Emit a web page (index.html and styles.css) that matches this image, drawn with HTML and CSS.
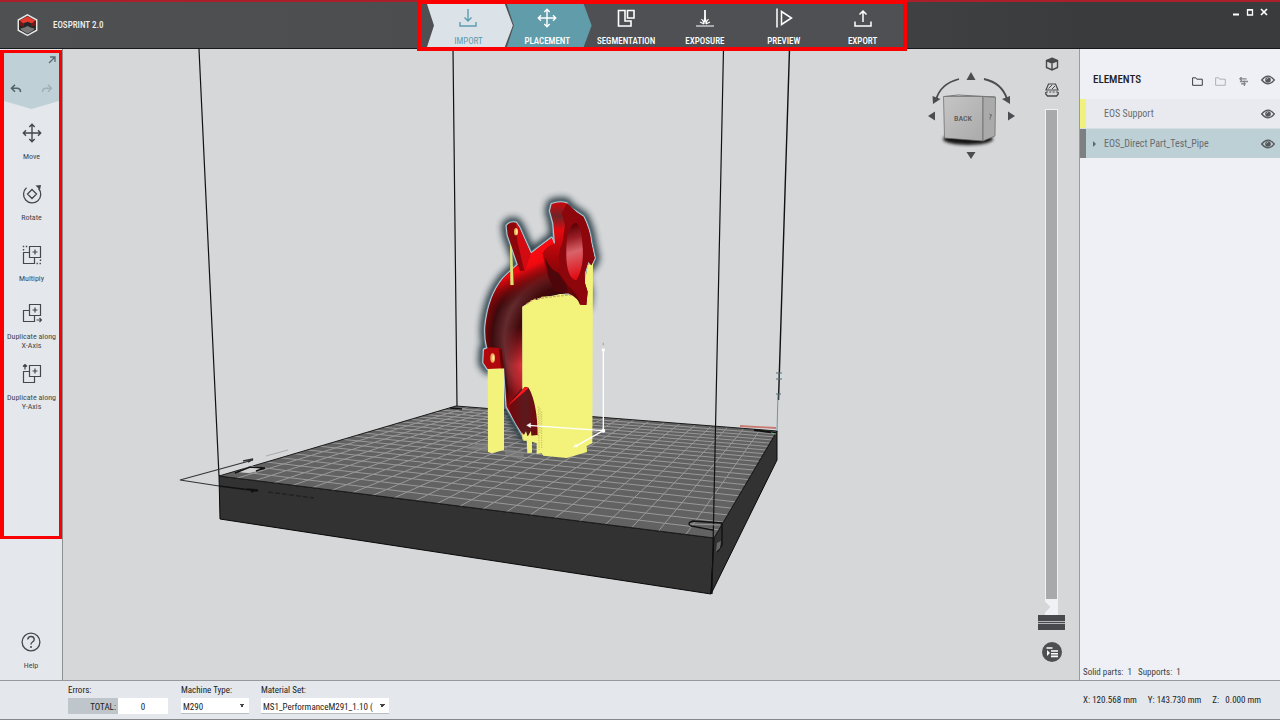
FILE: index.html
```html
<!DOCTYPE html>
<html lang="en">
<head>
<meta charset="utf-8">
<meta name="viewport" content="width=device-width, initial-scale=1">
<title>EOSPRINT 2.0</title>
<link rel="stylesheet" href="styles.css">
</head>
<body>
<svg class="defs" aria-hidden="true">
  <symbol id="eye" viewBox="0 0 14 10"><path d="M.7 5Q7-2.6 13.3 5 7 12.600.7 5Z" fill="none" stroke="#55575b" stroke-width="1.300"/><circle cx="7" cy="5" r="2.800" fill="#55575b"/><path d="M5.500 4.500Q6 3.300 7.200 3.300" stroke="#ddd" stroke-width=".7" fill="none"/></symbol>
  <symbol id="move" viewBox="0 0 20 20"><path d="M10 1.500v17M1.500 10h17M7.300 4 10 1.300 12.700 4M7.300 16 10 18.700 12.700 16M4 7.300 1.300 10 4 12.700M16 7.300 18.700 10 16 12.700" fill="none" stroke="currentColor" stroke-width="1.400"/></symbol>
  <symbol id="folder" viewBox="0 0 11 9"><path d="M.6 8.300V.8h3.200l1 1.400h5.500v6.100z" fill="none" stroke="currentColor"/></symbol>
</svg>

<header class="topbar">
  <div class="brand">
    <svg class="logo" viewBox="0 0 20 22"><path d="M10 .8 19.200 6v10.200L10 21.300.8 16.200V6z" fill="#252525" stroke="#e8e8e8" stroke-width="1.500"/><path d="M10 2.200 17.800 6.500 14.500 9.500 10 7.800 5.500 9.500 2.200 6.500z" fill="#e33a30"/><path d="M2.500 7.500l4 3v2l-4-1zM17.500 7.500l-4 3v2l4-1z" fill="#7d1513"/><path d="M10 12l3 1.500 4 1-1 1.800-6 3.500-6-3.500-1-1.800 4-1z" fill="#777"/></svg>
    <h1>EOSPRINT 2.0</h1>
  </div>
  <nav class="steps">
    <button class="step step-import"><svg viewBox="0 0 20 20"><path d="M10 1v12M6.500 9.500 10 13l3.500-3.500M2 14v4h16v-4" fill="none" stroke="currentColor" stroke-width="1.400"/></svg><span>IMPORT</span></button>
    <button class="step step-current"><svg><use href="#move"/></svg><span>PLACEMENT</span></button>
    <button class="step"><svg viewBox="0 0 20 20"><path d="M9 2.500H2.500V18H15v-5H9zM11.500 2.500H18V10h-6.500z" fill="none" stroke="currentColor" stroke-width="1.600"/></svg><span>SEGMENTATION</span></button>
    <button class="step"><svg viewBox="0 0 20 20"><path d="M10 2v12" stroke="currentColor" stroke-width="1.800"/><path d="M1 18h18M6.500 11l2.500 3.500M13.500 11 11 14.500M5 14l4 2M15 14l-4 2M10 9 8.500 15h3z" fill="none" stroke="currentColor" stroke-width="1.100"/></svg><span>EXPOSURE</span></button>
    <button class="step"><svg viewBox="0 0 20 20"><path d="M3 .5v19M7.500 3.500v13L17.500 10z" fill="none" stroke="currentColor" stroke-width="1.500"/></svg><span>PREVIEW</span></button>
    <button class="step"><svg viewBox="0 0 20 20"><path d="M10 14V3M6.500 6.500 10 3l3.500 3.500M2 13.500V18h16v-4.500" fill="none" stroke="currentColor" stroke-width="1.500"/></svg><span>EXPORT</span></button>
  </nav>
  <div class="window-buttons">
    <button aria-label="Minimize"><svg viewBox="0 0 8 8"><path d="M1 6.500h6" stroke="#fff" stroke-width="2"/></svg></button>
    <button aria-label="Maximize"><svg viewBox="0 0 8 8"><path d="M1.500 2h5v5h-5zM1 1.700h6" fill="none" stroke="#fff" stroke-width="1.300"/></svg></button>
    <button aria-label="Close"><svg viewBox="0 0 8 8"><path d="M1 1l6 6M7 1 1 7" stroke="#fff" stroke-width="1.700"/></svg></button>
  </div>
</header>

<main class="workspace">
  <aside class="sidebar">
    <section class="tools">
      <div class="history">
        <button class="expand" aria-label="Expand"><svg viewBox="0 0 8 8"><path d="M1 7l5.500-5.500M2 1h5v5" fill="none" stroke="#5b6a70" stroke-width="1.300"/></svg></button>
        <div class="history-row">
          <button aria-label="Undo"><svg viewBox="0 0 12 10"><path d="M5 .8 1.500 4.300 5 7.800M1.500 4.300H7Q10.500 4.500 10.500 8" fill="none" stroke="#53636a" stroke-width="1.600"/></svg></button>
          <button aria-label="Redo"><svg viewBox="0 0 12 10"><path d="M7 .8 10.500 4.300 7 7.800M10.500 4.300H5Q1.500 4.500 1.500 8" fill="none" stroke="#9cb0b6" stroke-width="1.400"/></svg></button>
        </div>
      </div>
      <button class="tool"><svg><use href="#move"/></svg><span>Move</span></button>
      <button class="tool"><svg viewBox="0 0 20 20"><path d="M4.500 3.800A8.600 8.600 0 1 0 16.500 4.500M10 5.500 14.500 10 10 14.500 5.500 10z" fill="none" stroke="currentColor" stroke-width="1.300"/><path d="M19 1l-5.500.5 4.500 4.500z" fill="currentColor"/></svg><span>Rotate</span></button>
      <button class="tool"><svg viewBox="0 0 20 20"><path d="M7.500 1.500h11v11h-11zM7.500 7.500h-6v11h11v-6M13 4.500v5M10.500 7h5" fill="none" stroke="currentColor" stroke-width="1.200"/><path d="M.8 1.500h5M1.500 4v2M14.500 18.500h5M18.500 14.500v2" stroke="currentColor" stroke-width="1.400" stroke-dasharray="1.400 1.600"/></svg><span>Multiply</span></button>
      <div class="duplicates">
        <button class="tool"><svg viewBox="0 0 20 20"><path d="M7.500 1.500h11v11h-11zM7.500 7.500h-6v11h11v-6M13 4.500v5M10.500 7h5M14.500 17h5M17.500 15l2 2-2 2" fill="none" stroke="currentColor" stroke-width="1.200"/></svg><span>Duplicate along<br>X-Axis</span></button>
        <button class="tool"><svg viewBox="0 0 20 20"><path d="M7.500 1.500h11v11h-11zM7.500 7.500h-6v11h11v-6M13 4.500v5M10.500 7h5M3 5.500v-5M1 2.500l2-2 2 2" fill="none" stroke="currentColor" stroke-width="1.200"/></svg><span>Duplicate along<br>Y-Axis</span></button>
      </div>
    </section>
    <button class="tool help"><svg viewBox="0 0 20 20"><circle cx="10" cy="10" r="8.900" fill="none" stroke="currentColor" stroke-width="1.300"/><path d="M6.800 7.500Q7 4.500 10 4.500t3.200 2.800Q13.200 9 11.500 10 10 11 10 12.500" fill="none" stroke="currentColor" stroke-width="1.400"/><circle cx="10" cy="15" r="1" fill="currentColor"/></svg><span>Help</span></button>
  </aside>

  <section class="viewport" aria-label="Build platform">
    <svg class="scene" viewBox="63 49 1016 631">
      <defs>
        <radialGradient id="pipe" cx="340" cy="450" r="305" gradientUnits="userSpaceOnUse"><stop offset=".4" stop-color="#350608"/><stop offset=".55" stop-color="#43090b"/><stop offset=".68" stop-color="#632b2e"/><stop offset=".8" stop-color="#3c0a0d"/><stop offset=".87" stop-color="#750609"/><stop offset="1" stop-color="#c8080d"/></radialGradient>
        <linearGradient id="top" x1="165" y1="185" x2="222" y2="318" gradientUnits="userSpaceOnUse"><stop offset="0" stop-color="#ff0b12"/><stop offset=".4" stop-color="#f00a10"/><stop offset=".65" stop-color="#8d070a" stop-opacity=".8"/><stop offset="1" stop-color="#3b0608" stop-opacity="0"/></linearGradient>
        <linearGradient id="lower" x1="0" y1="410" x2="0" y2="620" gradientUnits="userSpaceOnUse"><stop offset="0" stop-color="#e52430" stop-opacity="0"/><stop offset=".55" stop-color="#ef3740"/><stop offset="1" stop-color="#ad1118"/></linearGradient>
        <linearGradient id="lowfade" x1="125" y1="0" x2="190" y2="0" gradientUnits="userSpaceOnUse"><stop offset="0" stop-color="#000"/><stop offset="1" stop-color="#fff"/></linearGradient>
        <mask id="fade"><rect x="100" y="380" width="100" height="270" fill="url(#lowfade)"/></mask>
        <linearGradient id="flange" x1="0" y1="36" x2="0" y2="320" gradientUnits="userSpaceOnUse"><stop offset="0" stop-color="#cf070d"/><stop offset=".15" stop-color="#6c2528"/><stop offset=".3" stop-color="#e30a10"/><stop offset=".6" stop-color="#a20509"/><stop offset="1" stop-color="#600406"/></linearGradient>
        <linearGradient id="bore" x1="320" y1="110" x2="365" y2="260" gradientUnits="userSpaceOnUse"><stop offset="0" stop-color="#5d0205"/><stop offset=".25" stop-color="#9c1f27"/><stop offset=".5" stop-color="#d9636a"/><stop offset="1" stop-color="#e20b13"/></linearGradient>
        <linearGradient id="cone" x1="150" y1="0" x2="235" y2="0" gradientUnits="userSpaceOnUse"><stop offset="0" stop-color="#75070b"/><stop offset=".55" stop-color="#591b1e"/><stop offset="1" stop-color="#780509"/></linearGradient>
        <linearGradient id="cube" x1="0" y1="0" x2="1" y2="1"><stop offset="0" stop-color="#c5c5c6"/><stop offset="1" stop-color="#aaaaab"/></linearGradient>
        <filter id="glow" x="-30%" y="-20%" width="160%" height="140%"><feGaussianBlur stdDeviation="10"/></filter>
        <filter id="soft" x="-20%" y="-80%" width="140%" height="260%"><feGaussianBlur stdDeviation="1.500"/></filter>
        <path id="body" d="M275 144Q190 205 130 265 85 320 76 410 73 470 95 500L132 530 140 650 190 738H232V590H187V350Q225 320 340 308z"/>
        <path id="lug" d="M140 107Q150 94 168 98L178 113 212 190 193 242 180 243 143 135z"/>
        <path id="rim" d="M275 42Q300 33 320 40L325 50 350 67 370 80Q390 120 393 155L404 205 394 226 385 215 374 250 375 280 383 305 379 345 360 344Q355 325 325 310L283 302 272 280 260 255 248 190Q258 168 285 160L280 100 270 63z"/>
        <path id="tab" d="M72 479 89 472 125 475 132 535 83 537 70 518z"/>
        <g id="silhouette" fill="none" stroke-linejoin="round"><use href="#body"/><use href="#lug"/><use href="#rim"/><use href="#tab"/></g>
      </defs>

      <g fill="#323232" stroke="#080808">
        <path d="M219 476 714 538 711 594 220 519z"/>
        <path d="M714 538 777 431V460L711 594z"/>
      </g>
      <path d="M219 476 456 406 777 431 714 538z" fill="#626262"/>
      <path id="grid" fill="none" stroke="#999"/>
      <path d="M219 476 456 406 777 431 714 538z" fill="none" stroke="#1b1b1b"/>
      <path d="M466 449q12-8 23-7v10zM505 448l20 4-3 8-17-5z" fill="#858585" opacity=".6"/>
      <path d="M199 49 219 476M453 49 457 406M723.500 49 712 594" fill="none" stroke="#111" stroke-width="1.200"/>
      <path d="M789.500 49 778.500 400" stroke="#111" stroke-width="1.400"/>
      <path d="M778 394 777 431" stroke="#7293a0"/>
      <path d="M776 373h6M776 379h6M776 394h5M779 373v6" stroke="#526c77"/>
      <path d="M740 426 776 428" stroke="#c87a72" stroke-width="1.800"/>
      <path d="M754 430l22 3" stroke="#111" stroke-width="2"/><path d="M771 433l5 1" stroke="#72ba8d"/>
      <g stroke="#333" fill="none"><path d="M253 460 180 480 219 486" stroke-width="1.100"/><path d="M243 461l10-2-5 3" stroke-width="1.600"/></g>
      <path d="M219 486 258 491M247 489l11 1-7 2" fill="none" stroke="#111" stroke-width="1.400"/>
      <path d="M266 456l22-6" stroke="#aaa"/><path d="M268 492l46 6" stroke="#222" stroke-width="1.500" stroke-dasharray="5 2"/>
      <path d="M237 472l14-7 12 5-14 3z" fill="#cfcfcf"/><path d="M235 473l15-6 15 1-9 3M450 408l12 1" fill="none" stroke="#111" stroke-width="1.500"/>
      <path d="M713 530l-22-4q-5-3 2-5l29 2v22l-5 7" fill="none" stroke="#111" stroke-width="1.400"/><path d="M690 524l30 1" stroke="#999"/><path d="M717 543l4-2-1 7-4 4z" fill="#686868"/>

      <g transform="translate(460 190) scale(.3333)">
        <use href="#silhouette" stroke="#22343c" stroke-width="32" opacity=".9" filter="url(#glow)"/>
        <use href="#silhouette" stroke="#4d7482" stroke-width="13"/>
        <use href="#silhouette" stroke="#b4c6cd" stroke-width="7"/>
        <use href="#body" fill="url(#pipe)"/>
        <use href="#body" fill="url(#top)"/>
        <path d="M125 400h62v190l-39 52z" fill="url(#lower)" mask="url(#fade)"/>
        <path d="M150 165h6l5 120h-10z" fill="#dfe176"/>
        <use href="#lug" fill="#8a070b"/><path d="M168 98 178 113 212 190 193 242 172 155z" fill="#d20b12"/>
        <ellipse cx="168" cy="125" rx="6" ry="11" fill="#e8b45d"/><ellipse cx="170" cy="125" rx="3" ry="8" fill="#fae897"/>
        <path d="M187 350 207 338 215 330 235 330 245 320 280 318 300 312 330 315 355 308 372 340 375 270 384 225 399 219 397 760 380 768 381 786 320 804 250 797 245 790 230 792V760L216 755V788L202 790 200 750 187 748z" fill="#f3f37c"/>
        <path d="M200 342l20-13 28-5 40-5 62-6" fill="none" stroke="#c9ad5c" stroke-width="4" stroke-dasharray="8 4"/>
        <path d="M83 535H132V780L95 790 84 786z" fill="#f3f37c"/>
        <use href="#rim" fill="url(#flange)"/>
        <path d="M322 40 350 67 370 80Q390 120 393 155L404 205 394 226 385 215 374 250 375 280 383 305 379 345 361 343Q353 310 325 288L300 250Q290 190 308 155L315 105 305 70z" fill="#8d060b"/>
        <path d="M255 202Q270 240 296 250L321 288 323 308 283 302 266 263z" fill="#4d070a"/>
        <path d="M348 98C325 105 318 150 319 194c0 40 10 75 30 76 15-20 22-60 19-98-2-38-8-70-20-74z" fill="url(#bore)"/>
        <path d="M148 642 195 590 206 593Q232 640 233 735L195 739Q165 705 148 660z" fill="url(#cone)"/><path d="M148 642 195 591 206 594 192 607 146 646z" fill="#ff161d"/>
        <path d="M190 738l8-14 5 16 10-18 2 30H190z" fill="#f3f37c"/><path d="M235 650v90M240 655v75M245 665v110M237 735v45" stroke="#b5a556" stroke-width="2" stroke-dasharray="4 3"/>
        <use href="#tab" fill="#b1080e"/><path d="M117 475l8 1 8 59h-10z" fill="#620408"/><ellipse cx="98" cy="504" rx="7" ry="14" fill="#edac5b"/><ellipse cx="100" cy="504" rx="3" ry="9" fill="#fff0a3"/>
        <path d="M430 722V480M430 722 205 706M430 722 345 770" stroke="#fff" stroke-width="4"/>
        <circle cx="430" cy="722" r="6" fill="#fff"/><circle cx="430" cy="480" r="5" fill="#fff"/><path d="M200 706l12-7v14zM340 771l8-9 5 9z" fill="#fff" stroke="#fff"/><path d="M430 458v8" stroke="#aaa" stroke-width="4"/>
      </g>

      <ellipse cx="968" cy="139" rx="25" ry="6" fill="#151515" filter="url(#soft)"/>
      <path d="M943.500 96.500 983 96.500 983 141 944.500 138z" fill="url(#cube)" stroke="#666" stroke-width=".7"/><path d="M983 96.500 995.500 97 995 136 983 141z" fill="#aaa" stroke="#666" stroke-width=".7"/><path d="M944 96.500 958 95 995 97" fill="none" stroke="#777"/>
      <text class="cube-label" x="954" y="121">BACK</text><path d="M989 114l3 1-2 3 1-4-1 6" stroke="#777" fill="none" stroke-width=".8"/>
      <g fill="#4b4d50"><path d="M971 72l4.500 8h-9zM971 159l4.500-7h-9zM928 116l7-4.500v9zM1015 116l-7-4.500v9zM933 104l-.5-8 8 3zM1010 104l-8-5 8-3z"/></g>
      <path d="M959 79q-19 5-23 21M984 79q18 4 23 20" fill="none" stroke="#4b4d50" stroke-width="1.800"/>
    </svg>
    <div class="view-controls">
      <button aria-label="Perspective"><svg viewBox="0 0 14 14"><path d="M7 1.200 12.500 3.500v7L7 13 1.500 10.500v-7zM1.500 3.500 7 6l5.500-2.500M7 6v7" fill="none" stroke="#47494c" stroke-width="1.400"/><path d="M7 1.500 12 3.500 7 5.700 2 3.500z" fill="#47494c"/></svg></button>
      <button aria-label="Section view"><svg viewBox="0 0 14 14"><path d="M3.500 1h7L13 7H1z" fill="none" stroke="#47494c" stroke-width="1.200"/><path d="M3.500 5.500 7 2M7 6l3-3" stroke="#47494c"/><path d="M.8 9v2l1.700 2h9l1.700-2V9" fill="none" stroke="#47494c" stroke-width="1.300"/><path d="M1 9h12" stroke="#47494c" stroke-dasharray="2 1.300"/></svg></button>
      <input class="layer-slider" type="range" min="0" max="100" value="0" aria-label="Layer height">
      <button class="view-menu" aria-label="View options"><svg viewBox="0 0 20 20"><circle cx="10" cy="10" r="10" fill="#4d4f52"/><path d="M4.500 6h6M9 9h7M9 11.700h7M9 14.400h7" stroke="#fff" stroke-width="1.600"/><path d="M5 8l3 3-3 3z" fill="#fff"/></svg></button>
    </div>
  </section>

  <aside class="elements">
    <div class="elements-head">
      <h2>ELEMENTS</h2>
      <button class="head-icon" aria-label="New folder"><svg><use href="#folder"/></svg></button>
      <button class="head-icon pale" aria-label="Remove folder"><svg><use href="#folder"/></svg></button>
      <button class="head-icon" aria-label="Sort"><svg viewBox="0 0 11 10"><path d="M1 2h8M1.500 5h9M3 7.500h5M3.500 0l-2 2 2 2M6.500 4v6" fill="none" stroke="#83878b" stroke-width="1.400"/></svg></button>
      <button class="visibility" aria-label="Show all"><svg><use href="#eye"/></svg></button>
    </div>
    <ul>
      <li class="support"><i></i><span>EOS Support</span><button class="visibility" aria-label="Show EOS Support"><svg><use href="#eye"/></svg></button></li>
      <li class="selected"><i></i><button class="disclose" aria-label="Expand pipe"><svg viewBox="0 0 3 6"><path d="M0 0l3 3-3 3z" fill="#5c686d"/></svg></button><span>EOS_Direct Part_Test_Pipe</span><button class="visibility" aria-label="Show pipe"><svg><use href="#eye"/></svg></button></li>
    </ul>
    <p class="counts"><span>Solid parts:&nbsp; 1</span><span>Supports:&nbsp; 1</span></p>
  </aside>
</main>

<footer class="statusbar">
  <div class="field errors"><span>Errors:</span><div class="total"><label for="total">TOTAL:</label><input id="total" value="0" readonly></div></div>
  <div class="field machine"><label for="machine">Machine Type:</label><select id="machine"><option>M290</option></select></div>
  <div class="field material"><label for="material">Material Set:</label><select id="material"><option>MS1_PerformanceM291_1.10 (</option></select></div>
  <div class="coords"><span>X: 120.568 mm</span><span>Y: 143.730 mm</span><span>Z:&nbsp;&nbsp; 0.000 mm</span></div>
</footer>
<script src="grid.js"></script>
</body>
</html>
```
FILE: styles.css
```css
* { box-sizing: border-box; }
body {
  margin: 0;
  height: 100vh;
  display: flex;
  flex-direction: column;
  overflow: hidden;
  font-family: "Liberation Sans Narrow", "Arial Narrow", "Roboto Condensed", "Liberation Sans", sans-serif;
  font-size: 9px;
  line-height: 12px;
  color: #3c3e41;
}
button { padding: 0; border: 0; background: none; font: inherit; color: inherit; }
svg { display: block; }
h1, h2, p, ul { margin: 0; padding: 0; }
.defs { display: none; }

.topbar {
  flex: none;
  height: 49px;
  display: grid;
  grid-template-columns: 417px 490px 1fr;
  background: linear-gradient(90deg, #4f5052, #4c4d4f 40%, #3a3b3d 85%);
  border-top: 2px solid #ab1f2b;
  border-bottom: 1px solid #17181a;
}
.brand { display: flex; align-items: center; gap: 15px; padding: 0 0 4px 17px; color: #eee; }
.logo { width: 21px; height: 22px; }
.brand h1 { font-size: 9px; line-height: 12px; font-weight: 500; }
.steps {
  position: relative;
  z-index: 2;
  height: 51px;
  margin-top: -2px;
  padding: 0 1px 0 8px;
  display: grid;
  grid-template-columns: repeat(6, 1fr);
  border: 4px solid #fb0000;
  background: #4f5053;
}
.step {
  position: relative;
  z-index: 0;
  display: flex;
  flex-direction: column;
  align-items: center;
  gap: 7px;
  padding-top: 4px;
  color: #fff;
  font-size: 9px;
  line-height: 12px;
  font-weight: 500;
}
.step svg { width: 20px; height: 20px; }
.step-import { color: #5d9db1; font-weight: 400; }
.step-import::before, .step-current::before {
  content: "";
  position: absolute;
  z-index: -1;
  inset: 0 -5px 0 -2px;
  background: #dbe3e8;
  clip-path: polygon(0 0, calc(100% - 8px) 0, 100% 50%, calc(100% - 8px) 100%, 0 100%, 7px 50%);
}
.step-current::before { background: #619caa; left: -1px; }
.window-buttons { display: flex; justify-content: flex-end; gap: 6px; padding: 6px 12px; }
.window-buttons button, .window-buttons svg { width: 8px; height: 8px; }

.workspace { flex: 1; min-height: 0; display: grid; grid-template-columns: 63px minmax(0, 1fr) 201px; }
.sidebar {
  display: flex;
  flex-direction: column;
  justify-content: space-between;
  background: #e4e7ec;
  border-right: 1px solid #8c8e90;
}
.tools {
  height: 489px;
  margin-top: 1px;
  border: 3px solid #fb0000;
  border-left-width: 4px;
}
.history {
  height: 56px;
  padding: 3px 3px 0;
  background: #bfd1d7;
  clip-path: polygon(0 0, 100% 0, 100% 48px, 50% 100%, 0 48px);
}
.expand { display: block; margin-left: auto; }
.expand svg { width: 8px; height: 8px; }
.history-row { display: flex; justify-content: space-between; padding: 20px 3px 0; }
.history-row svg { width: 12px; height: 10px; }
.tool {
  display: flex;
  flex-direction: column;
  align-items: center;
  gap: 9px;
  width: 100%;
  height: 61px;
  padding-top: 14px;
  color: #44474b;
  font-size: 8px;
  line-height: 9px;
  white-space: nowrap;
}
.tool svg { width: 20px; height: 20px; }
.duplicates { margin-top: -3px; }
.help { height: 52px; padding-top: 4px; }

.viewport { position: relative; min-width: 0; background: #d6d7d9; }
.scene { width: 100%; height: 100%; }
.cube-label { font-size: 8px; font-weight: 500; fill: #5b5b5b; }
.view-controls {
  position: absolute;
  top: 8px;
  right: 14px;
  bottom: 18px;
  width: 27px;
  display: flex;
  flex-direction: column;
  align-items: center;
  gap: 12px;
}
.view-controls button svg { width: 14px; height: 14px; }
.view-controls .view-menu svg { width: 20px; height: 20px; }
.layer-slider {
  flex: 1;
  min-height: 0;
  width: 27px;
  margin: 0;
  appearance: none;
  writing-mode: vertical-lr;
  direction: rtl;
  background:
    linear-gradient(#a8a9aa, #a8a9aa) center 1px / 11px calc(100% - 32px) no-repeat,
    conic-gradient(from 225deg at 5px 50%, #d6d7d9 90deg, transparent 90deg) 7px calc(100% - 17px) / 13px 12px no-repeat,
    linear-gradient(#eff1f4, #eff1f4) center / 13px 100% no-repeat;
}
.layer-slider::-webkit-slider-thumb {
  appearance: none;
  width: 27px;
  height: 15px;
  background: linear-gradient(#47494c 6px, #b5b6b8 6px, #b5b6b8 7px, #47494c 7px, #47494c 8px, #b5b6b8 8px, #b5b6b8 9px, #47494c 9px);
}

.elements { display: flex; flex-direction: column; background: #eef0f6; border-left: 1px solid #999b9e; }
.elements-head { display: flex; align-items: center; gap: 12px; height: 50px; padding: 12px 5px 0 13px; }
.elements-head h2 { margin-right: auto; color: #222; font-size: 11px; line-height: 14px; font-weight: 500; }
.head-icon { padding-top: 3px; }
.head-icon svg { width: 11px; height: 9px; }
.pale { color: #aeb1b5; }
.visibility svg { width: 14px; height: 10px; }
.elements ul { list-style: none; }
.elements li { display: flex; align-items: center; height: 29px; padding-right: 5px; background: #e9eaef; color: #686c70; font-size: 10px; line-height: 14px; }
.elements li + li { height: 30px; border-top: 1px solid #d5dfe3; }
.elements li i { align-self: stretch; width: 6px; margin-right: 18px; background: #f1f17e; }
.elements .selected { background: #bdd0d6; }
.elements .selected i { background: #7d7f81; margin-right: 7px; }
.disclose { width: 11px; }
.disclose svg { width: 3px; height: 6px; }
.elements li span { flex: 1; }
.counts { display: flex; gap: 6px; margin-top: auto; padding: 0 3px 2px; }

.statusbar { flex: none; height: 40px; display: flex; background: #e4e7ec; border-top: 1px solid #96989b; border-bottom: 1px solid #85878a; padding: 3px 0 0 68px; color: #222; }
.field { display: flex; flex-direction: column; gap: 2px; }
.errors { width: 100px; margin-right: 13px; }
.machine { width: 68px; margin-right: 12px; }
.material { width: 128px; }
.total { display: grid; grid-template-columns: 1fr 1fr; height: 16px; background: #bec6cc; }
.total label { text-align: right; padding: 3px 2px 0 0; }
.total input { min-width: 0; border: 0; padding: 2px 0 0; text-align: center; font: inherit; color: inherit; background: #fff; }
select {
  width: 100%;
  height: 16px;
  padding: 2px 2px 0;
  border: 0;
  border-bottom: 1px solid #b9bcc0;
  border-radius: 0;
  appearance: none;
  font: inherit;
  color: inherit;
  background: conic-gradient(from -45deg at 50% 100%, #444 90deg, transparent 90deg) right 4px center / 6px 3px no-repeat, #fff;
  background: linear-gradient(45deg, transparent 50%, #444 50%) right 7px center / 3px 3px no-repeat, linear-gradient(-45deg, transparent 50%, #444 50%) right 4px center / 3px 3px no-repeat, #fff;
}
.coords { display: flex; gap: 11px; width: 197px; margin-left: auto; padding-top: 10px; white-space: nowrap; }
```
FILE: grid.js
```js
// Project a square grid onto the four corners of the plate.
const [a, b, c, d] = [[219, 476], [714, 538], [777, 431], [456, 406]];
const dx1 = b[0] - c[0], dx2 = d[0] - c[0], sx = a[0] - b[0] + c[0] - d[0];
const dy1 = b[1] - c[1], dy2 = d[1] - c[1], sy = a[1] - b[1] + c[1] - d[1];
const det = dx1 * dy2 - dx2 * dy1;
const g = (sx * dy2 - dx2 * sy) / det;
const h = (dx1 * sy - sx * dy1) / det;
const point = (u, v) => {
  const w = g * u + h * v + 1;
  const x = ((b[0] - a[0] + g * b[0]) * u + (d[0] - a[0] + h * d[0]) * v + a[0]) / w;
  const y = ((b[1] - a[1] + g * b[1]) * u + (d[1] - a[1] + h * d[1]) * v + a[1]) / w;
  return x.toFixed(2) + " " + y.toFixed(2);
};
let path = "";
const cells = 22;
for (let i = 1; i < cells; i++) {
  const t = i / cells;
  path += `M${point(t, 0)}L${point(t, 1)}M${point(0, t)}L${point(1, t)}`;
}
document.getElementById("grid").setAttribute("d", path);
```
